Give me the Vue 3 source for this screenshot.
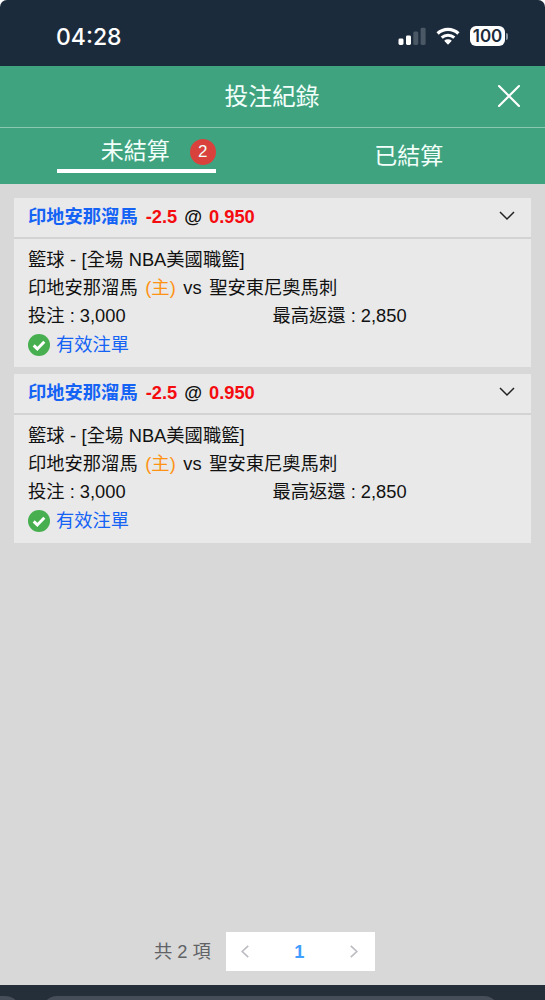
<template>
  <div class="screen">
    <div class="status-bar">
      <span class="clock">04:28</span>
      <div class="status-icons">
        <svg class="signal" width="28" height="18" viewBox="0 0 28 18">
          <rect x="0.5" y="11.5" width="5" height="6.5" rx="1.4" fill="#fff" />
          <rect x="8" y="8.5" width="5" height="9.5" rx="1.4" fill="#fff" />
          <rect x="15.3" y="4.5" width="5" height="13.5" rx="1.4" fill="#4a5764" />
          <rect x="22.6" y="0.8" width="5" height="17.2" rx="1.4" fill="#4a5764" />
        </svg>
        <svg class="wifi" width="24" height="18" viewBox="0 0 24 18">
          <path d="M1.6 6.5a15 15 0 0 1 20.8 0" fill="none" stroke="#fff" stroke-width="3.2" />
          <path d="M5.7 10.7a9.2 9.2 0 0 1 12.6 0" fill="none" stroke="#fff" stroke-width="3" />
          <path d="M12 17.8l-3.8-4a5.6 5.6 0 0 1 7.6 0z" fill="#fff" />
        </svg>
        <div class="battery">100</div>
        <div class="battery-cap"></div>
      </div>
    </div>

    <header class="title-bar">
      <span class="title">投注紀錄</span>
      <svg class="close" width="24" height="24" viewBox="0 0 24 24">
        <path d="M2 2l20 20M22 2L2 22" fill="none" stroke="#fff" stroke-width="2.1" stroke-linecap="round" />
      </svg>
    </header>

    <nav class="tabs">
      <div class="tab" @click="tab = 'open'">
        <div class="tab-label" :class="{ active: tab === 'open' }">
          <span>未結算</span>
          <span class="count">{{ bets.length }}</span>
        </div>
      </div>
      <div class="tab" @click="tab = 'settled'">
        <div class="tab-label" :class="{ active: tab === 'settled' }">已結算</div>
      </div>
    </nav>

    <main class="list">
      <div class="card" v-for="bet in bets" :key="bet.id">
        <div class="card-head">
          <span class="pick">{{ bet.home }}</span>
          <span class="odds">{{ bet.handicap }}</span>
          <span>@</span>
          <span class="odds">{{ bet.odds }}</span>
          <svg class="chevron" width="16" height="10" viewBox="0 0 16 10">
            <path d="M1 1l7 7 7-7" fill="none" stroke="#222" stroke-width="1.5" />
          </svg>
        </div>
        <div class="card-body">
          <div class="league">{{ bet.league }}</div>
          <div class="match">
            <span>{{ bet.home }}</span>
            <span class="host">(主)</span>
            <span>vs</span>
            <span>{{ bet.away }}</span>
          </div>
          <div class="amounts">
            <span>投注 : {{ bet.stake }}</span>
            <span>最高返還 : {{ bet.payout }}</span>
          </div>
          <div class="state">
            <svg width="22" height="22" viewBox="0 0 22 22">
              <circle cx="11" cy="11" r="11" fill="#47af50" />
              <path d="M5.7 11.4l3.6 3.5 7-7.1" fill="none" stroke="#fff" stroke-width="2.9" />
            </svg>
            <span>有效注單</span>
          </div>
        </div>
      </div>
    </main>

    <footer class="pagination">
      <span class="total">共 {{ bets.length }} 項</span>
      <div class="pager">
        <svg width="8" height="13" viewBox="0 0 8 13">
          <path d="M7.2 0.8L1.2 6.5l6 5.7" fill="none" stroke="#bbbdc1" stroke-width="1.7" />
        </svg>
        <span class="page">1</span>
        <svg width="8" height="13" viewBox="0 0 8 13">
          <path d="M0.8 0.8l6 5.7-6 5.7" fill="none" stroke="#bbbdc1" stroke-width="1.7" />
        </svg>
      </div>
    </footer>

    <div class="browser-bar">
      <div class="address side"></div>
      <div class="address"></div>
    </div>
  </div>
</template>

<script setup>
import { ref } from 'vue'

const tab = ref('open')

const bet = {
  home: '印地安那溜馬',
  away: '聖安東尼奧馬刺',
  league: '籃球 - [全場 NBA美國職籃]',
  handicap: '-2.5',
  odds: '0.950',
  stake: '3,000',
  payout: '2,850'
}

const bets = ref([
  { id: 1, ...bet },
  { id: 2, ...bet }
])
</script>

<style>
body {
  margin: 0;
  background: #fff;
}
</style>

<style scoped>
.screen {
  display: flex;
  flex-direction: column;
  width: 545px;
  height: 1000px;
  overflow: hidden;
  border-radius: 7px 7px 0 0;
  background: #d8d8d8;
  color: #111;
  font-family: 'Liberation Sans', 'Noto Sans CJK TC', sans-serif;
  font-size: 18.3px;
}

/* Status bar */
.status-bar {
  display: flex;
  justify-content: space-between;
  box-sizing: border-box;
  height: 66px;
  padding: 22px 37px 0 56px;
  background: #1c2b3b;
}

.clock {
  color: #fff;
  font-family: Inter, sans-serif;
  font-size: 23px;
  font-weight: 500;
  line-height: 30px;
}

.status-icons {
  display: flex;
  align-items: center;
  height: 28px;
}

.wifi {
  margin: 0 10px 0 10px;
}

.battery {
  width: 35px;
  height: 20px;
  border-radius: 6px;
  background: #fff;
  color: #1c2b3b;
  font-family: Inter, sans-serif;
  font-size: 17px;
  font-weight: 600;
  line-height: 20px;
  text-align: center;
}

.battery-cap {
  width: 2px;
  height: 7px;
  margin-left: 1px;
  border-radius: 0 2px 2px 0;
  background: #8b959e;
}

/* Header and tabs */
.title-bar {
  display: flex;
  align-items: center;
  box-sizing: border-box;
  height: 62px;
  padding: 0 24px 2px 47px;
  border-bottom: 1px solid #8cc8b1;
  background: #40a380;
  color: #f2fffa;
}

.title {
  flex: 1;
  padding-top: 2px;
  font-size: 23.8px;
  line-height: 34px;
  text-align: center;
}

.tabs {
  display: flex;
  height: 56px;
  background: #40a380;
  color: #f2fffa;
  font-size: 23px;
}

.tab {
  display: flex;
  flex: 1;
  align-items: center;
  justify-content: center;
}

.tab-label {
  display: flex;
  align-items: center;
  justify-content: flex-end;
  line-height: 35px;
}

.tab-label.active {
  gap: 20px;
  width: 159px;
  border-bottom: 4px solid #fff;
  box-sizing: border-box;
  margin-bottom: 5px;
}

.count {
  width: 26px;
  height: 26px;
  margin-top: 1px;
  border-radius: 50%;
  background: #d9423c;
  font-size: 17px;
  line-height: 26px;
  text-align: center;
}

/* Bets */
.list {
  display: flex;
  flex: 1;
  flex-direction: column;
  gap: 7px;
  padding: 14px 14px 0;
}

.card {
  height: 169px;
  background: #e9e9e9;
}

.card-head {
  display: flex;
  align-items: center;
  box-sizing: border-box;
  height: 41px;
  padding: 0 16px 2px 14px;
  border-bottom: 2px solid #d3d3d3;
  font-weight: 700;
  line-height: 28px;
  gap: 7px;
}

.pick {
  margin-right: 1px;
  color: #1463f5;
}

.odds {
  color: #f40c10;
}

.chevron {
  margin: 0 0 2px auto;
}

.card-body {
  padding: 7px 14px 0;
  line-height: 28px;
}

.league {
  word-spacing: 0.4px;
}

.match {
  display: flex;
  gap: 7.6px;
}

.host {
  color: #ff9213;
}

.amounts {
  display: flex;
}

.amounts span {
  flex: 1;
}

.state {
  display: flex;
  align-items: center;
  gap: 6px;
  height: 30px;
  color: #1463f5;
}

/* Pagination */
.pagination {
  display: flex;
  align-items: center;
  gap: 15px;
  padding: 0 0 14px 154px;
  color: #606266;
}

.total {
  padding-bottom: 4px;
}

.pager {
  display: flex;
  align-items: center;
  justify-content: space-between;
  box-sizing: border-box;
  width: 149px;
  height: 39px;
  padding: 0 17px 0 15px;
  background: #fff;
}

.page {
  color: #409eff;
  font-weight: 700;
}

/* Browser toolbar */
.browser-bar {
  display: flex;
  gap: 21px;
  box-sizing: border-box;
  height: 15px;
  padding-top: 11px;
  overflow: hidden;
  background: #252f39;
}

.address {
  width: 457px;
  height: 30px;
  border-radius: 16px;
  background: #464e59;
}

.address.side {
  flex-shrink: 0;
  width: 21px;
  border-radius: 0 16px 0 0;
}
</style>
